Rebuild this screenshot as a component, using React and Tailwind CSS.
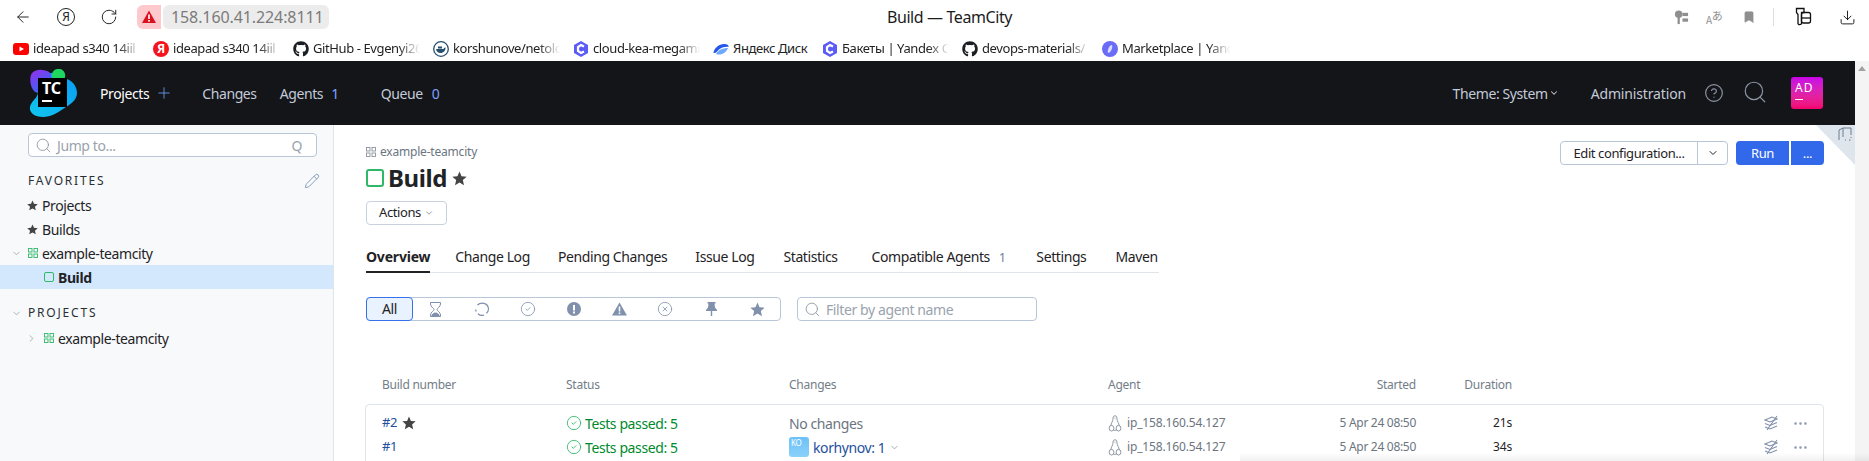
import React from "react";
import { ArrowLeft, RotateCw, Plus, ChevronDown, ChevronRight, Search, Pencil, CircleHelp, Download, Bookmark, CircleCheck, CircleX, Ellipsis } from "lucide-react";
import { FaGithub } from "react-icons/fa";

const F = { fontFamily: "'Noto Sans', sans-serif" };

function GridIcon({ className }) {
  return (
    <svg viewBox="0 0 10 10" className={className} fill="none" stroke="currentColor" strokeWidth="0.900">
      <rect x="0.5" y="0.5" width="3.5" height="3.5" />
      <rect x="6" y="0.5" width="3.5" height="3.5" />
      <rect x="0.5" y="6" width="3.5" height="3.5" />
      <rect x="6" y="6" width="3.5" height="3.5" />
    </svg>
  );
}
function StarFill({ className }) {
  return (
    <svg viewBox="0 0 14 14" className={className} fill="currentColor">
      <path d="M7 0.500 8.900 4.900 13.700 5.300 10.100 8.500 11.200 13.200 7 10.700 2.800 13.200 3.900 8.500 0.300 5.300 5.100 4.900Z" />
    </svg>
  );
}
function Logo() {
  return (
    <div className="relative w-12 h-12 shrink-0">
      <svg viewBox="0 0 48 48" className="w-12 h-12">
        <defs>
          <linearGradient id="tcp" x1="0" y1="0" x2="0.6" y2="1"><stop offset="0" stopColor="#9a2cf0" /><stop offset="1" stopColor="#2f6cf0" /></linearGradient>
          <linearGradient id="tcb" x1="0" y1="1" x2="1" y2="0"><stop offset="0" stopColor="#11c6ee" /><stop offset="1" stopColor="#0a9cf5" /></linearGradient>
        </defs>
        <path d="M22 4C30 4 34 8 38 10 44 12 48 18 48 24 48 32 40 36 34 40 28 44 22 48 14 48 6 48 0 44 1 38 2 32 8 30 9 24 10 16 14 4 22 4Z" fill="url(#tcb)" />
        <path d="M3 4C8 -1 16 1 20 3 24 6 22 12 20 18 17 24 9 26 5 22 1 18 0 8 3 4Z" fill="url(#tcp)" />
        <path d="M28 0C33 -1 37 3 36 8 35 12 29 12 25 10 21 7 23 1 28 0Z" fill="#1ed760" />
      </svg>
      <div className="absolute left-[9px] top-[9px] w-[29px] h-[29px] bg-black text-white flex flex-col pl-[4px] pt-[1px]">
        <span className="text-[16px] leading-[18px] font-bold tracking-[-0.2px]">TC</span>
        <span className="w-[10px] h-[2px] bg-white mt-[3px]" />
      </div>
    </div>
  );
}
function BM({ icon, label, w = 107, fade = true }) {
  return (
    <div className="flex items-center gap-[4px] shrink-0">
      <span className="w-[16px] h-[16px] flex items-center justify-center shrink-0">{icon}</span>
      <span
        className={fade ? "overflow-hidden whitespace-nowrap text-[13px] text-[#222] [mask-image:linear-gradient(to_right,black_80%,transparent)]" : "whitespace-nowrap text-[13px] text-[#222]"}
        style={{ width: w }}
      >
        {label}
      </span>
    </div>
  );
}
const Yt = <svg viewBox="0 0 16 16" className="w-4 h-4"><rect y="2" width="16" height="12" rx="3" fill="#f00" /><path d="M6.500 5.500 11 8 6.500 10.500Z" fill="#fff" /></svg>;
const Ya = <span className="w-4 h-4 rounded-full bg-[#f5141e] text-white text-[12px] leading-4 font-bold text-center">Я</span>;
const Gh = <FaGithub className="w-4 h-4 text-[#1b1f23]" />;
const Dk = <svg viewBox="0 0 16 16" className="w-4 h-4"><circle cx="8" cy="8" r="7.300" fill="#fff" stroke="#27506f" strokeWidth="1.300" /><path d="M3 8h7.500c.5-1 1-1.500 2-1.500.3 3-2 5.500-5 5.500-2.500 0-4-1.500-4.500-4Z" fill="#27506f" /><rect x="5" y="5.500" width="4" height="2" fill="#27506f" /></svg>;
const Cl = <svg viewBox="0 0 16 16" className="w-4 h-4"><path d="M8 0 15 4v8L8 16 1 12V4Z" fill="#5b5bf5" /><path d="M11 5.500 8 4 5 6v4l3 2 3-1.500" fill="none" stroke="#fff" strokeWidth="2.200" /></svg>;
const Di = <svg viewBox="0 0 16 16" className="w-4 h-4"><path d="M0.500 12C1 7 6 3 11 3c3 0 5 1 4.500 3C14 5.500 9 6 6 8.500 4.500 10 3 12.500 0.500 12Z" fill="#2558e8" /><path d="M3 13c2-4 7-6 12-6-1 3-4 6-8 6.500-1.500.2-3 0-4-.5Z" fill="#6fa8ff" /></svg>;
const Mk = <svg viewBox="0 0 16 16" className="w-4 h-4"><circle cx="8" cy="8" r="8" fill="#6a6cf5" /><path d="M10 4c1 2-1 8-4 8-1-2 1-8 4-8Z" fill="#d7dcff" /></svg>;

function BrowserBar() {
  return (
    <div className="h-[37px] pb-[3px] flex items-center bg-white relative shrink-0">
      <ArrowLeft className="w-[18px] h-[18px] ml-[14px] text-[#222]" strokeWidth={1.300} />
      <span className="ml-[25px] w-[18px] h-[18px] rounded-full border border-[#222] text-[12px] leading-[16px] text-center text-[#222]">Я</span>
      <RotateCw className="ml-[25px] w-[18px] h-[18px] text-[#222]" strokeWidth={1.300} />
      <div className="ml-[19px] w-[24px] h-[24px] rounded-l-[6px] bg-[#fdc9cd] flex items-center justify-center">
        <svg viewBox="0 0 14 14" className="w-[14px] h-[14px]"><path d="M7 0.500 14 13H0Z" fill="#d8121f" /><rect x="6.200" y="4.500" width="1.600" height="4.500" fill="#fff" /><rect x="6.200" y="10" width="1.600" height="1.600" fill="#fff" /></svg>
      </div>
      <div className="ml-[2px] w-[166px] h-[24px] rounded-[6px] bg-[#ececec] text-[#7b7b7b] text-[16px] leading-[24px] pl-[8px] whitespace-nowrap tracking-[-0.1px]">158.160.41.224:8111</div>
      <div className="flex-1 text-center pr-[104px] text-[16px] text-[#1c1c1c]">Build — TeamCity</div>
      <div className="flex items-center pr-[13px]">
        <svg viewBox="0 0 16 16" className="w-[15px] h-[15px]" fill="#8f8f8f"><circle cx="5" cy="4.500" r="4" /><rect x="3.800" y="7" width="2.400" height="8" /><rect x="9" y="3" width="6" height="3.500" /><rect x="9" y="9" width="6" height="3.500" /></svg>
        <span className="ml-[17px] w-[18px] flex text-[#8f8f8f] whitespace-nowrap" style={{ fontFamily: "'Noto Sans CJK JP', sans-serif" }}>
          <span className="text-[10px] leading-[12px] translate-y-[3px]">A</span>
          <span className="text-[11px] leading-[12px] -translate-y-[2px]">あ</span>
        </span>
        <Bookmark className="ml-[18px] w-[14px] h-[16px] text-[#8f8f8f]" fill="#8f8f8f" strokeWidth={1} />
        <span className="ml-[17px] w-px h-[18px] bg-[#dddddd]" />
        <svg viewBox="0 0 20 20" className="ml-[20px] w-[20px] h-[20px]" fill="none" stroke="#111" strokeWidth="1.300"><path d="M2.500 1.500h7.500v4H7.500v11c0 1.500-3.500 1.500-3.500 0V7.500L2.500 5.500Z" /><rect x="7.500" y="5.500" width="9" height="10.500" rx="2" /><path d="M7.500 11h9" /></svg>
        <Download className="ml-[25px] w-[17px] h-[17px] text-[#111]" strokeWidth={1.300} />
      </div>
    </div>
  );
}
function Bookmarks() {
  return (
    <div className="h-[24px] flex items-center gap-[13px] pl-[13px] bg-white shrink-0">
      <BM icon={Yt} label="ideapad s340 14iil" />
      <BM icon={Ya} label="ideapad s340 14iil" />
      <BM icon={Gh} label="GitHub - Evgenyi26" />
      <BM icon={Dk} label="korshunove/netolog" />
      <BM icon={Cl} label="cloud-kea-megamind" />
      <BM icon={Di} label="Яндекс Диск" w={76} fade={false} />
      <BM icon={Cl} label="Бакеты | Yandex Cloud" />
      <BM icon={Gh} label="devops-materials/" />
      <BM icon={Mk} label="Marketplace | Yandex" w={108} />
    </div>
  );
}
function NavBar() {
  return (
    <div className="h-[64px] bg-[#141518] flex items-center pl-[29px] pr-[32px] text-[14px] text-[#c3cad8] shrink-0">
      <Logo />
      <span className="ml-[23px] text-white">Projects</span>
      <Plus className="ml-[6px] w-[18px] h-[18px] text-[#6fa0ff]" strokeWidth={1.100} />
      <span className="ml-[29px]">Changes</span>
      <span className="ml-[23px]">Agents</span>
      <span className="ml-[8px] text-[#7ea2ff]">1</span>
      <span className="ml-[42px]">Queue</span>
      <span className="ml-[9px] text-[#7ea2ff]">0</span>
      <span className="ml-auto">Theme: System</span>
      <ChevronDown className="ml-[1px] w-[10px] h-[10px]" strokeWidth={2.500} />
      <span className="ml-[32px] tracking-[-0.15px]">Administration</span>
      <CircleHelp className="ml-[18px] w-[20px] h-[20px] text-[#8b95a5]" strokeWidth={1.400} />
      <Search className="ml-[18px] w-[26px] h-[26px] text-[#8b95a5] -mt-[2px]" strokeWidth={1.100} />
      <div className="ml-[23px] w-[32px] h-[32px] rounded-[3px] bg-gradient-to-b from-[#c800e8] to-[#f5006e] text-white flex flex-col px-[4px] pt-[3px]">
        <span className="text-[12px] leading-[16px] tracking-[1px]">AD</span>
        <span className="w-[8px] h-[1px] bg-white mt-[3px]" />
      </div>
    </div>
  );
}
function TreeRow({ children, active }) {
  return <div className={"h-[24px] flex items-center text-[14px] text-[#1f2326] " + (active ? "bg-[#d4e8fd]" : "")}>{children}</div>;
}
function Sidebar() {
  return (
    <aside className="w-[334px] shrink-0 bg-[#f7f9fa] border-r border-[#dfe5eb] pt-[8px]">
      <div className="ml-[28px] w-[289px] h-[24px] bg-white border border-[#b8c6d8] rounded-[4px] flex items-center pl-[6px] pr-[14px] text-[14px] text-[#9aa3ad]">
        <Search className="w-[17px] h-[17px] text-[#8a949e]" strokeWidth={1.200} />
        <span className="ml-[5px]">Jump to...</span>
        <span className="ml-auto">Q</span>
      </div>
      <div className="mt-[14px] pl-[28px] pr-[13px] h-[20px] flex items-center justify-between text-[12px] tracking-[1.800px] text-[#2a2f33]">
        <span>FAVORITES</span>
        <Pencil className="w-[16px] h-[16px] text-[#7388ad]" strokeWidth={1.200} />
      </div>
      <div className="mt-[2px]">
        <TreeRow><StarFill className="ml-[27px] w-[11px] h-[11px] text-[#444]" /><span className="ml-[4px]">Projects</span></TreeRow>
        <TreeRow><StarFill className="ml-[27px] w-[11px] h-[11px] text-[#444]" /><span className="ml-[4px]">Builds</span></TreeRow>
        <TreeRow>
          <ChevronDown className="ml-[11px] w-[11px] h-[11px] text-[#8a949e]" strokeWidth={1.500} />
          <GridIcon className="ml-[6px] w-[10px] h-[10px] text-[#2fb86a]" />
          <span className="ml-[4px]">example-teamcity</span>
        </TreeRow>
        <TreeRow active>
          <span className="ml-[44px] w-[10px] h-[10px] border border-[#2fb86a] rounded-[2px]" />
          <span className="ml-[4px] font-bold">Build</span>
        </TreeRow>
      </div>
      <div className="mt-[14px] h-[20px] flex items-center text-[12px] tracking-[1.800px] text-[#2a2f33]">
        <ChevronDown className="ml-[11px] w-[11px] h-[11px] text-[#8a949e]" strokeWidth={1.500} />
        <span className="ml-[6px]">PROJECTS</span>
      </div>
      <div className="mt-[3px]">
        <TreeRow>
          <ChevronRight className="ml-[26px] w-[11px] h-[11px] text-[#8a949e]" strokeWidth={1.500} />
          <GridIcon className="ml-[7px] w-[10px] h-[10px] text-[#2fb86a]" />
          <span className="ml-[4px]">example-teamcity</span>
        </TreeRow>
      </div>
    </aside>
  );
}
const filterCls = "w-[46px] flex justify-center text-[#8090ad]";
function FilterBar() {
  return (
    <div className="flex items-center gap-[16px]">
      <div className="w-[415px] h-[24px] flex items-center border border-[#b8c6d8] rounded-[4px]">
        <div className="-ml-px w-[47px] h-[24px] bg-[#e8f3ff] border border-[#3471ea] rounded-[4px] text-[14px] leading-[22px] text-center text-[#1f2326]">All</div>
        <div className={filterCls}>
          <svg viewBox="0 0 11 15" className="w-[11px] h-[15px]" fill="none" stroke="currentColor" strokeWidth="1"><path d="M.5 .5h10v1.500C10.500 5 7 6 7 7.500S10.500 10 10.500 13v1.500H.5V13C.5 10 4 9 4 7.500S.5 5 .5 2Z" /><path d="M2 13c1-1.500 2.500-2 3.500-2S8 11.500 9 13v1H2Z" fill="currentColor" /></svg>
        </div>
        <div className={filterCls}>
          <svg viewBox="0 0 14 14" className="w-[14px] h-[14px]" fill="none" stroke="currentColor" strokeWidth="1.300"><path d="M2.500 3C5 .5 9.500.5 12 3c2 2.500 1.800 6-.5 8.300" /><path d="M9 13.200c-2 .5-4.500 0-6-1.500" /><path d="M1 9.500 .8 7.500" /></svg>
        </div>
        <div className={filterCls}><CircleCheck className="w-[16px] h-[16px]" strokeWidth={1.200} /></div>
        <div className={filterCls}>
          <svg viewBox="0 0 14 14" className="w-[14px] h-[14px]"><circle cx="7" cy="7" r="7" fill="currentColor" /><rect x="6" y="3" width="2" height="5.500" fill="#fff" /><rect x="6" y="9.500" width="2" height="2" fill="#fff" /></svg>
        </div>
        <div className={filterCls}>
          <svg viewBox="0 0 15 14" className="w-[15px] h-[14px]"><path d="M7.500 .5 15 13.500H0Z" fill="currentColor" /><rect x="6.700" y="4.500" width="1.600" height="5" fill="#fff" /><rect x="6.700" y="10.500" width="1.600" height="1.600" fill="#fff" /></svg>
        </div>
        <div className={filterCls}><CircleX className="w-[16px] h-[16px]" strokeWidth={1.200} /></div>
        <div className={filterCls}>
          <svg viewBox="0 0 11 14" className="w-[11px] h-[14px]" fill="currentColor"><path d="M1.500 0h8v1.500H8.500L9 5.500 11 8v1H0V8l2-2.500L2.500 1.500H1.500Z" /><rect x="4.800" y="9" width="1.400" height="5" /></svg>
        </div>
        <div className={filterCls}><StarFill className="w-[15px] h-[15px]" /></div>
      </div>
      <div className="w-[240px] h-[24px] bg-white border border-[#b8c6d8] rounded-[4px] flex items-center pl-[6px] text-[14px] text-[#9aa3ad]">
        <Search className="w-[17px] h-[17px] text-[#8a949e]" strokeWidth={1.200} />
        <span className="ml-[5px]">Filter by agent name</span>
      </div>
    </div>
  );
}
function Tabs() {
  const t = [
    ["Change Log", "", ""],
    ["Pending Changes", "", ""],
    ["Issue Log", "", "mr-[1px]"],
    ["Statistics", "", "mr-[6px]"],
    ["Compatible Agents", "1", "mr-[3px]"],
    ["Settings", "", "mr-[1px]"],
    ["Maven", "", ""],
  ];
  return (
    <div className="w-[793px] h-[30px] flex gap-[28px] border-b border-[#dfe5eb] text-[14px] text-[#1f2326]">
      <div className="h-[30px] -mr-[3px] border-b-2 border-[#1f2326] font-bold leading-[28px] tracking-[-0.2px]">Overview</div>
      {t.map(([a, b, c]) => (
        <div key={a} className={"leading-[28px] whitespace-nowrap " + c}>
          {a}
          {b && <span className="ml-[9px] text-[12px] text-[#6b7c99]">{b}</span>}
        </div>
      ))}
    </div>
  );
}
const cols = "grid grid-cols-[200px_223px_319px_231px_77px_96px_1fr] items-center";
function Penguin() {
  return (
    <svg viewBox="0 0 14 18" className="w-[14px] h-[17px] text-[#7d8793]" fill="none" stroke="currentColor" strokeWidth="0.900">
      <path d="M7 .8C5.300 .8 4.800 2.500 4.800 4.500 4.800 6.800 2.800 8.500 2.500 11.500M7 .8C8.700 .8 9.200 2.500 9.200 4.500 9.200 6.800 11.200 8.500 11.500 11.500" />
      <path d="M6 3.500h.5M7.500 3.500H8" />
      <ellipse cx="3.300" cy="14" rx="2.500" ry="3" />
      <ellipse cx="10.700" cy="14" rx="2.500" ry="3" />
      <path d="M5.500 16c1 .4 2 .4 3 0" />
    </svg>
  );
}
function RowIcon() {
  return (
    <svg viewBox="0 0 14 16" className="w-[14px] h-[16px] text-[#8090ad]" fill="none" stroke="currentColor" strokeWidth="1.100">
      <path d="M1 5 8 2 13 4 6 7Z" /><path d="M1 8.500 6 10.500 13 7.500" /><path d="M1 12 6 14 13 11" /><path d="M13 1 3 15" />
    </svg>
  );
}
function Row({ num, star, changes, dur }) {
  return (
    <div className={cols + " h-[24px] text-[14px]"}>
      <div className="pl-[16px] flex items-center gap-[5px] text-[#23509e] text-[13px]">{num}{star && <StarFill className="w-[14px] h-[14px] text-[#444]" />}</div>
      <div className="flex items-center gap-[3px] text-[#008a2e]">
        <CircleCheck className="w-[16px] h-[16px] text-[#2fb86a]" strokeWidth={1.300} />
        Tests passed: 5
      </div>
      <div>{changes}</div>
      <div className="flex items-center gap-[5px] text-[12px] text-[#6b7580] tracking-[-0.15px]"><Penguin />ip_158.160.54.127</div>
      <div className="text-right text-[12px] text-[#6b7580] whitespace-nowrap tracking-[-0.3px]">5 Apr 24 08:50</div>
      <div className="text-right text-[12px] text-[#1f2326] tracking-[-0.2px]">{dur}</div>
      <div className="flex items-center justify-end gap-[14px] pr-[14px]">
        <RowIcon />
        <Ellipsis className="w-[17px] h-[17px] text-[#8090ad]" strokeWidth={1.500} />
      </div>
    </div>
  );
}
function Main() {
  return (
    <main className="flex-1 relative overflow-hidden pl-[32px] bg-white">
      <div className="absolute top-0 right-0 w-[39px] h-[40px] bg-[#dfe5ed] [clip-path:polygon(0_0,100%_0,100%_100%)]" />
      <svg viewBox="0 0 14 14" className="absolute top-[2px] right-[3px] w-[14px] h-[14px] text-[#6b7c8f]" fill="none" stroke="currentColor" strokeWidth="1"><path d="M1 13V3l4-2h8v7M5 1v9" /><path d="M7 13h1M11 13h1.500M13 10v1" /></svg>
      <div className="flex justify-between pt-[21px] pr-[31px]">
        <div>
          <div className="flex items-center gap-[4px] h-[12px] text-[12px] text-[#6b7580] tracking-[-0.2px]">
            <GridIcon className="w-[10px] h-[10px] text-[#8a949e]" />example-teamcity
          </div>
          <div className="mt-[8px] h-[24px] flex items-center">
            <span className="w-[18px] h-[18px] border-2 border-[#2fb86a] rounded-[3px]" />
            <span className="ml-[4px] text-[24px] leading-[24px] font-bold text-[#1f2326]">Build</span>
            <StarFill className="ml-[5px] w-[15px] h-[15px] text-[#444]" />
          </div>
          <button className="mt-[11px] w-[81px] h-[24px] border border-[#c8d2de] rounded-[4px] flex items-center justify-center gap-[3px] text-[13px] text-[#1f2326]">
            Actions<ChevronDown className="w-[10px] h-[10px] text-[#7f8b96]" strokeWidth={2} />
          </button>
        </div>
        <div className="flex items-start -mt-[5px]">
          <div className="w-[168px] h-[24px] border border-[#b8c6d8] rounded-[4px] flex items-center text-[13px] text-[#1f2326]">
            <span className="w-[137px] text-center whitespace-nowrap border-r border-[#b8c6d8] leading-[22px]">Edit configuration...</span>
            <ChevronDown className="ml-[9px] w-[12px] h-[12px]" strokeWidth={2} />
          </div>
          <div className="ml-[8px] h-[24px] w-[53px] bg-[#3268ea] rounded-l-[4px] text-white text-[13px] leading-[24px] text-center">Run</div>
          <div className="ml-[2px] h-[24px] w-[33px] bg-[#3268ea] rounded-r-[4px] text-white text-[13px] leading-[24px] text-center">...</div>
        </div>
      </div>
      <div className="mt-[18px]"><Tabs /></div>
      <div className="mt-[24px]"><FilterBar /></div>
      <div className={cols + " mt-[54px] h-[20px] text-[12px] text-[#737d87] pr-[31px] tracking-[-0.25px]"}>
        <div className="pl-[16px]">Build number</div>
        <div>Status</div>
        <div>Changes</div>
        <div>Agent</div>
        <div className="text-right">Started</div>
        <div className="text-right">Duration</div>
        <div />
      </div>
      <div className="mt-[9px] -ml-px mr-[31px] border border-[#dfe5eb] rounded-[4px] pt-[6px] h-[70px]">
        <Row num="#2" star changes={<span className="text-[#6b7580]">No changes</span>} dur="21s" />
        <Row num="#1" dur="34s" changes={
          <div className="flex items-center text-[#23509e]">
            <span className="w-[20px] h-[20px] rounded-[3px] bg-gradient-to-b from-[#6cc1f7] to-[#8ad1fb] text-white text-[8px] leading-[12px] pl-[2px]">KO</span>
            <span className="ml-[4px]">korhynov: 1</span>
            <ChevronDown className="ml-[4px] w-[11px] h-[11px] text-[#7f8b96]" strokeWidth={1.500} />
          </div>
        } />
      </div>
    </main>
  );
}
export default function App() {
  return (
    <div className="w-[1869px] h-[461px] overflow-hidden flex flex-col bg-white relative tracking-[-0.4px]" style={F}>
      <BrowserBar />
      <Bookmarks />
      <div className="flex flex-1 min-h-0">
        <div className="flex-1 min-w-0 flex flex-col">
          <NavBar />
          <div className="flex flex-1 min-h-0">
            <Sidebar />
            <Main />
          </div>
        </div>
        <div className="w-[14px] bg-[#f4f4f4] flex justify-center pt-[5px]">
          <span className="w-0 h-0 border-x-[4px] border-x-transparent border-b-[5px] border-b-[#a3a3a3]" />
        </div>
      </div>
      <div className="absolute left-[1240px] right-0 bottom-0 h-[8px] bg-gradient-to-b from-transparent to-[#0000000f] pointer-events-none" />
    </div>
  );
}
